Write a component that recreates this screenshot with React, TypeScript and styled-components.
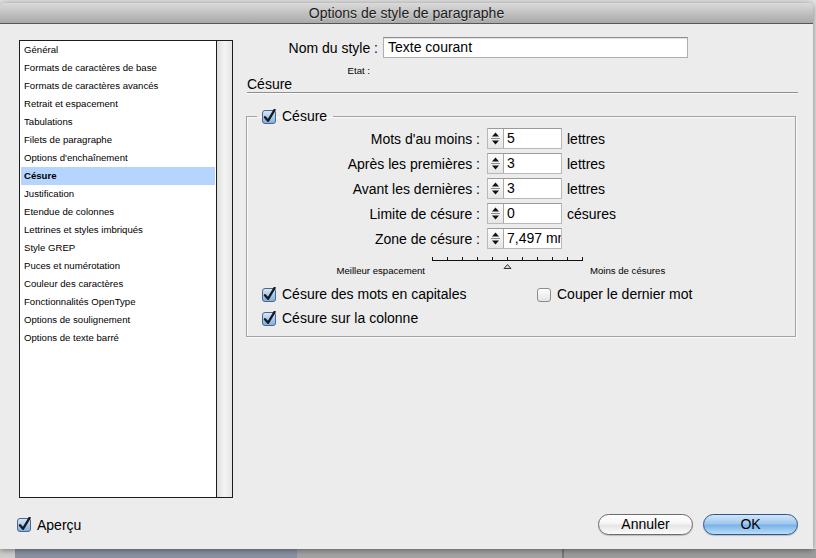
import React, { useId } from "react";
import styled, { createGlobalStyle } from "styled-components";

const SANS = `"Liberation Sans", Arial, sans-serif`;

const GlobalStyle = createGlobalStyle`
  html, body {
    margin: 0;
    padding: 0;
  }
  body {
    font-family: ${SANS};
    color: #000;
  }
`;

const Page = styled.div`
  width: 816px;
  height: 558px;
  overflow: hidden;
  box-sizing: border-box;
  padding-top: 3px;
  background-color: #e2e2e2;
  background-image: linear-gradient(
    to right,
    #cdcdcd 0 15px,
    #8b91a2 15px 297px,
    #a3a3a3 297px 562px,
    #7a7a7a 562px 564px,
    #9d9d9d 564px
  );
  background-size: 100% 9px;
  background-position: bottom left;
  background-repeat: no-repeat;
`;

const Dialog = styled.div`
  width: 813px;
  height: 546px;
  display: flex;
  flex-direction: column;
  background: #ececec;
  border-radius: 5px 5px 0 0;
  box-shadow: 0 1px 6px rgba(0, 0, 0, 0.45);
  overflow: hidden;
`;

const TitleBar = styled.div`
  height: 20px;
  flex: none;
  border-bottom: 1px solid #565656;
  background: linear-gradient(#dadada, #a9a9a9);
  display: flex;
  align-items: center;
  justify-content: center;
  font-size: 14px;
  color: #1b1b1b;
  text-shadow: 0 1px 0 rgba(255, 255, 255, 0.45);
`;

const Main = styled.div`
  display: flex;
  gap: 14px;
  padding: 13px 15px 0 19px;
`;

const ListBox = styled.div`
  width: 214px;
  height: 458px;
  margin-top: 3px;
  box-sizing: border-box;
  border: 1px solid #1c1c1c;
  display: flex;
  background: #fff;
`;

const Items = styled.ul`
  flex: 1;
  list-style: none;
  margin: 0;
  padding: 0;
`;

const Item = styled.li<{ $selected?: boolean }>`
  height: 18px;
  line-height: 18px;
  margin: 0 1px;
  padding-left: 3px;
  font-size: 9.6px;
  font-weight: ${(p) => (p.$selected ? "bold" : "normal")};
  background: ${(p) => (p.$selected ? "#b5d5ff" : "transparent")};
  white-space: nowrap;
`;

const ScrollTrack = styled.div`
  width: 15px;
  border-left: 1px solid #1c1c1c;
  background: linear-gradient(to right, #dedede, #f4f4f4 50%, #e6e6e6);
`;

const Panel = styled.div`
  width: 551px;
  display: flex;
  flex-direction: column;
`;

const NameRow = styled.div`
  display: flex;
  align-items: center;
  gap: 5px;
  height: 21px;
`;

const RightLabel = styled.span<{ $w: number; $small?: boolean }>`
  width: ${(p) => p.$w}px;
  flex: none;
  text-align: right;
  font-size: ${(p) => (p.$small ? "9.6px" : "14px")};
  white-space: nowrap;
`;

const TextField = styled.div`
  width: 305px;
  height: 21px;
  box-sizing: border-box;
  border: 1px solid #afafaf;
  border-top-color: #8c8c8c;
  background: #fff;
  box-shadow: inset 0 1px 1px rgba(0, 0, 0, 0.12);
  font-size: 14px;
  line-height: 19px;
  padding-left: 4px;
`;

const EtatRow = styled.div`
  display: flex;
  height: 12px;
  line-height: 12px;
  margin-top: 7px;
`;

const SectionTitle = styled.div`
  height: 15px;
  line-height: 15px;
  font-size: 14px;
  border-bottom: 1px solid #8d8d8d;
  box-shadow: 0 1px 0 #fafafa;
`;

const Group = styled.fieldset`
  margin: 16px 0 0 -1px;
  padding: 0 0 10px 0;
  min-width: 0;
  width: 550px;
  box-sizing: border-box;
  border: 1px solid #a2a2a2;
  box-shadow: 1px 1px 0 #fafafa, inset 1px 1px 0 #fafafa;
`;

const Legend = styled.legend`
  margin-left: 10px;
  padding: 0 6px 0 5px;
  display: flex;
  align-items: center;
  gap: 5px;
  height: 14px;
  font-size: 14px;
  line-height: 14px;
`;

const NumRows = styled.div`
  display: flex;
  flex-direction: column;
  gap: 4px;
  margin-top: 5px;
`;

const NumRow = styled.div`
  display: flex;
  align-items: center;
  height: 21px;
`;

const Spinner = styled.div`
  width: 75px;
  height: 21px;
  margin-left: 7px;
  box-sizing: border-box;
  display: flex;
  border: 1px solid #b9b9b9;
  border-top-color: #9a9a9a;
  background: #fff;
  overflow: hidden;
`;

const Arrows = styled.div`
  width: 15px;
  flex: none;
  border-right: 1px solid #a9a9a9;
  background: linear-gradient(#fbfbfb, #e6e6e6);
  display: flex;
  align-items: center;
  justify-content: center;
`;

const Value = styled.span`
  flex: 1;
  padding-left: 3px;
  font-size: 14px;
  line-height: 19px;
  white-space: nowrap;
  overflow: hidden;
`;

const Unit = styled.span`
  margin-left: 5px;
  font-size: 14px;
`;

const SliderRow = styled.div`
  display: flex;
  align-items: flex-end;
  height: 22px;
  margin-top: 6px;
`;

const SmallText = styled.span<{ $w?: number; $right?: boolean }>`
  ${(p) => (p.$w ? `width: ${p.$w}px; flex: none;` : "")}
  text-align: ${(p) => (p.$right ? "right" : "left")};
  font-size: 9.6px;
  line-height: 12px;
  white-space: nowrap;
`;

const Scale = styled.svg`
  align-self: flex-start;
  margin: 0 6px 0 7px;
  flex: none;
`;

const CheckGrid = styled.div`
  display: grid;
  grid-template-columns: 275px auto;
  row-gap: 8px;
  padding-left: 15px;
  margin-top: 9px;
`;

const CheckLabel = styled.label`
  display: flex;
  align-items: center;
  gap: 5px;
  height: 16px;
  font-size: 14px;
  white-space: nowrap;
`;

const Footer = styled.div`
  display: flex;
  align-items: center;
  height: 21px;
  padding: 16px 15px 0 17px;
`;

const Spacer = styled.div`
  flex: 1;
`;

const Button = styled.button<{ $primary?: boolean }>`
  width: 95px;
  height: 21px;
  margin-left: ${(p) => (p.$primary ? "10px" : "0")};
  box-sizing: border-box;
  border-radius: 11px;
  font-family: ${SANS};
  font-size: 14px;
  line-height: 19px;
  padding: 0;
  color: #000;
  border: 1px solid ${(p) => (p.$primary ? "#2f5688" : "#6b6b6b")};
  background: ${(p) =>
    p.$primary
      ? "linear-gradient(#d2e6f8 0%, #9cc7ef 48%, #78b1e8 52%, #b9def9 100%)"
      : "linear-gradient(#ffffff 0%, #f4f4f4 48%, #e4e4e4 52%, #fbfbfb 100%)"};
  box-shadow: 0 1px 1px rgba(0, 0, 0, 0.2);
`;

function CheckBox({ checked }: { checked: boolean }) {
  const id = useId().replace(/:/g, "");
  return (
    <svg width="15" height="15" viewBox="0 0 15 15" style={{ flex: "none" }}>
      <defs>
        <linearGradient id={`g${id}`} x1="0" y1="0" x2="0" y2="1">
          {checked ? (
            <>
              <stop offset="0" stopColor="#dbe9f8" />
              <stop offset="0.5" stopColor="#a9c9ec" />
              <stop offset="1" stopColor="#7fb0e2" />
            </>
          ) : (
            <>
              <stop offset="0" stopColor="#ffffff" />
              <stop offset="1" stopColor="#e2e2e2" />
            </>
          )}
        </linearGradient>
      </defs>
      <rect
        x="0.5"
        y="1.5"
        width="13"
        height="13"
        rx="2.5"
        fill={`url(#g${id})`}
        stroke={checked ? "#4f6688" : "#8c8c8c"}
      />
      {checked && (
        <path
          d="M3 8.2 L6 11.8 L12.6 0.8"
          fill="none"
          stroke="#161a22"
          strokeWidth="2.3"
          strokeLinecap="round"
          strokeLinejoin="round"
        />
      )}
    </svg>
  );
}

function SpinArrows() {
  return (
    <svg width="9" height="15" viewBox="0 0 9 15">
      <path d="M4.5 1.5 L8 5.5 L1 5.5 Z" fill="#111" />
      <line x1="0" y1="7.5" x2="9" y2="7.5" stroke="#8a8a8a" />
      <path d="M4.5 13.5 L8 9.5 L1 9.5 Z" fill="#111" />
    </svg>
  );
}

const SECTIONS = [
  "Général",
  "Formats de caractères de base",
  "Formats de caractères avancés",
  "Retrait et espacement",
  "Tabulations",
  "Filets de paragraphe",
  "Options d'enchaînement",
  "Césure",
  "Justification",
  "Etendue de colonnes",
  "Lettrines et styles imbriqués",
  "Style GREP",
  "Puces et numérotation",
  "Couleur des caractères",
  "Fonctionnalités OpenType",
  "Options de soulignement",
  "Options de texte barré",
];

const NUMBERS = [
  { label: "Mots d'au moins :", value: "5", unit: "lettres" },
  { label: "Après les premières :", value: "3", unit: "lettres" },
  { label: "Avant les dernières :", value: "3", unit: "lettres" },
  { label: "Limite de césure :", value: "0", unit: "césures" },
  { label: "Zone de césure :", value: "7,497 mm", unit: "" },
];

const TICKS = Array.from({ length: 11 }, (_, i) => 0.5 + i * 15);

export default function App() {
  return (
    <Page>
      <GlobalStyle />
      <Dialog>
        <TitleBar>Options de style de paragraphe</TitleBar>
        <Main>
          <ListBox>
            <Items>
              {SECTIONS.map((s) => (
                <Item key={s} $selected={s === "Césure"}>
                  {s}
                </Item>
              ))}
            </Items>
            <ScrollTrack />
          </ListBox>

          <Panel>
            <NameRow>
              <RightLabel $w={131}>Nom du style :</RightLabel>
              <TextField>Texte courant</TextField>
            </NameRow>
            <EtatRow>
              <RightLabel $w={123} $small>
                Etat :
              </RightLabel>
            </EtatRow>
            <SectionTitle>Césure</SectionTitle>

            <Group>
              <Legend>
                <CheckBox checked />
                Césure
              </Legend>
              <NumRows>
                {NUMBERS.map((n) => (
                  <NumRow key={n.label}>
                    <RightLabel $w={233}>{n.label}</RightLabel>
                    <Spinner>
                      <Arrows>
                        <SpinArrows />
                      </Arrows>
                      <Value>{n.value}</Value>
                    </Spinner>
                    {n.unit && <Unit>{n.unit}</Unit>}
                  </NumRow>
                ))}
              </NumRows>

              <SliderRow>
                <SmallText $w={178} $right>
                  Meilleur espacement
                </SmallText>
                <Scale width="152" height="16" viewBox="0 0 152 16">
                  <line x1="0" y1="5.5" x2="151" y2="5.5" stroke="#111" />
                  {TICKS.map((x) => (
                    <line key={x} x1={x} y1="2" x2={x} y2="6" stroke="#111" />
                  ))}
                  <path
                    d="M75.5 9.5 L79 13.5 L72 13.5 Z"
                    fill="#d6d6d6"
                    stroke="#333"
                  />
                </Scale>
                <SmallText>Moins de césures</SmallText>
              </SliderRow>

              <CheckGrid>
                <CheckLabel>
                  <CheckBox checked />
                  Césure des mots en capitales
                </CheckLabel>
                <CheckLabel>
                  <CheckBox checked={false} />
                  Couper le dernier mot
                </CheckLabel>
                <CheckLabel>
                  <CheckBox checked />
                  Césure sur la colonne
                </CheckLabel>
              </CheckGrid>
            </Group>
          </Panel>
        </Main>

        <Footer>
          <CheckLabel>
            <CheckBox checked />
            Aperçu
          </CheckLabel>
          <Spacer />
          <Button>Annuler</Button>
          <Button $primary>OK</Button>
        </Footer>
      </Dialog>
    </Page>
  );
}
